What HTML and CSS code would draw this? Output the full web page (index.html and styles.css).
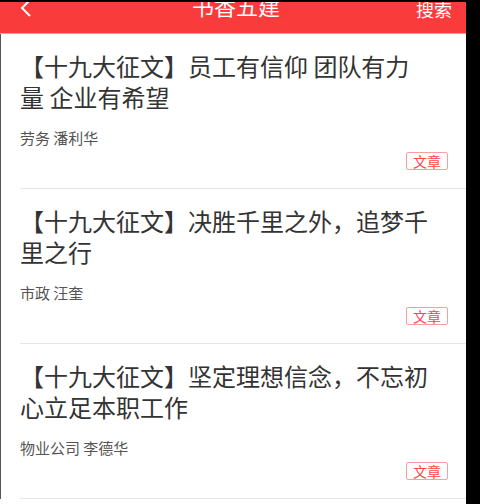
FILE: index.html
```html
<!DOCTYPE html>
<html lang="zh-CN">
<head>
    <meta charset="UTF-8">
    <meta name="viewport" content="width=device-width, initial-scale=1.0">
    <title>书香五建</title>
    <link rel="stylesheet" href="styles.css">
</head>
<body>
    <div class="app">
        <div class="top-bar">
            <span class="back">
                <svg width="12" height="20" viewBox="0 0 12 20">
                    <polyline points="10,1 2,9 10,17" fill="none" stroke="#fff" stroke-width="2"/>
                </svg>
            </span>
            <h1 class="page-title">书香五建</h1>
            <span class="search">搜索</span>
        </div>

        <ul class="article-list">
            <li class="article">
                <h2 class="article-title">【十九大征文】员工有信仰 团队有力量 企业有希望</h2>
                <p class="article-author">劳务 潘利华</p>
                <div class="article-foot"><span class="tag">文章</span></div>
            </li>
            <li class="article">
                <h2 class="article-title">【十九大征文】决胜千里之外，追梦千里之行</h2>
                <p class="article-author">市政 汪奎</p>
                <div class="article-foot"><span class="tag">文章</span></div>
            </li>
            <li class="article">
                <h2 class="article-title">【十九大征文】坚定理想信念，不忘初心立足本职工作</h2>
                <p class="article-author">物业公司 李德华</p>
                <div class="article-foot"><span class="tag">文章</span></div>
            </li>
        </ul>
    </div>
</body>
</html>
```

FILE: styles.css
```css
html, body {
    margin: 0;
    padding: 0;
    background: #000;
    height: 100%;
}
body {
    font-family: "Noto Sans CJK SC", sans-serif;
    overflow: hidden;
}
.app {
    width: 466px;
    margin-top: 2px;
    height: 502px;
    background: #fff;
}
.top-bar {
    height: 31px;
    background: #fa3b3b;
    border-bottom: 1px solid #fb9a9a;
    display: flex;
    align-items: flex-start;
    justify-content: space-between;
    overflow: hidden;
    color: #fff;
    padding: 0 14px 0 20px;
}
.back {
    width: 60px;
    margin-top: -3px;
}
.back svg { display: block; }
.page-title {
    margin: -7px 0 0;
    font-size: 22px;
    font-weight: normal;
    line-height: 20px;
}
.search {
    width: 60px;
    text-align: right;
    font-size: 18px;
    line-height: 16px;
    margin-top: -1px;
}
.article-list {
    list-style: none;
    margin: 0;
    padding: 0;
    border-left: 1px solid #555;
}
.article {
    margin-left: 19px;
    padding: 16px 18px 18px 0;
    border-bottom: 1px solid #e6e6e6;
}
.article-title {
    margin: 0;
    width: 410px;
    font-size: 24px;
    font-weight: normal;
    line-height: 31px;
    color: #333;
}
.article-author {
    margin: 16px 0 0;
    font-size: 15px;
    line-height: 20px;
    color: #555;
}
.article-foot {
    margin-top: 4px;
    display: flex;
    justify-content: flex-end;
}
.tag {
    border: 1px solid #ff9c9c;
    border-radius: 2px;
    padding: 0 6px;
    font-size: 14px;
    line-height: 16px;
    color: #ff4646;
}
```
